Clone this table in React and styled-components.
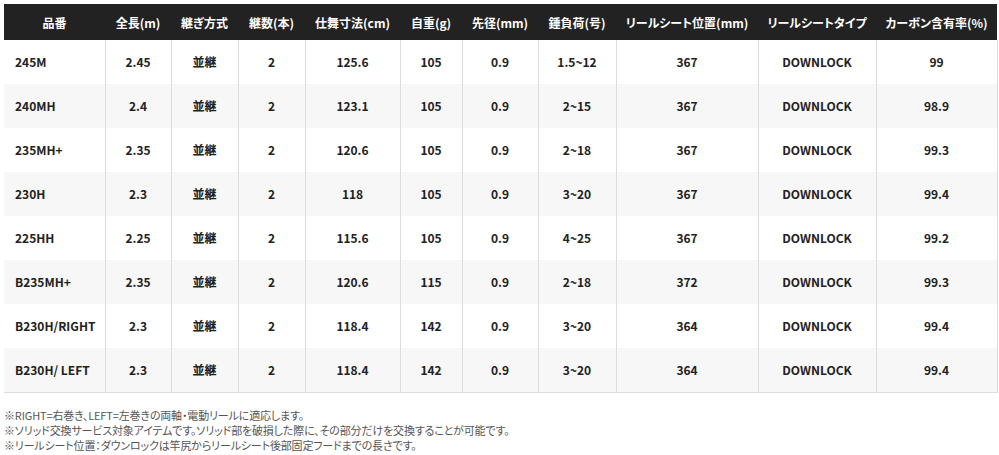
import React from 'react';
import styled, { createGlobalStyle } from 'styled-components';

const GlobalStyle = createGlobalStyle`
	body {
		margin: 0;
		background: #fff;
		font-family: 'Noto Sans CJK JP', 'Noto Sans', sans-serif;
		font-feature-settings: 'palt';
		color: #222;
	}
`;

const Page = styled.div`
	padding: 4px 0 0 4px;
`;

const Table = styled.table`
	border-collapse: collapse;
	table-layout: fixed;
	width: 993px;
	border-bottom: 1px solid #dcdcdc;
`;

const HeadCell = styled.th`
	background: #222;
	color: #fff;
	height: 36px;
	padding: 0;
	font-size: 12px;
	font-weight: 700;
	text-align: center;
	white-space: nowrap;
`;

const Row = styled.tr`
	background: ${(props) => (props.$odd ? '#f7f7f7' : '#fff')};
`;

const Cell = styled.td`
	height: 44px;
	padding: 0 0 0 ${(props) => (props.$left ? '11px' : '0')};
	font-size: 12px;
	font-weight: 700;
	line-height: 16px;
	color: #222;
	text-align: ${(props) => (props.$left ? 'left' : 'center')};
	border-left: ${(props) => (props.$left ? 'none' : '1px solid #dcdcdc')};
	border-right: ${(props) => (props.$last ? '1px solid #dcdcdc' : 'none')};
	white-space: nowrap;
`;

const Notes = styled.div`
	margin-top: 15px;
	font-size: 11px;
	line-height: 15px;
	letter-spacing: -0.15px;
	color: #555;
`;

const columns = [
	{ label: '品番', width: 101 },
	{ label: '全長(m)', width: 66 },
	{ label: '継ぎ方式', width: 67 },
	{ label: '継数(本)', width: 67 },
	{ label: '仕舞寸法(cm)', width: 95 },
	{ label: '自重(g)', width: 62 },
	{ label: '先径(mm)', width: 76 },
	{ label: '錘負荷(号)', width: 78 },
	{ label: 'リールシート位置(mm)', width: 142 },
	{ label: 'リールシートタイプ', width: 118 },
	{ label: 'カーボン含有率(%)', width: 121 },
];

const rows = [
	['245M', '2.45', '並継', '2', '125.6', '105', '0.9', '1.5~12', '367', 'DOWNLOCK', '99'],
	['240MH', '2.4', '並継', '2', '123.1', '105', '0.9', '2~15', '367', 'DOWNLOCK', '98.9'],
	['235MH+', '2.35', '並継', '2', '120.6', '105', '0.9', '2~18', '367', 'DOWNLOCK', '99.3'],
	['230H', '2.3', '並継', '2', '118', '105', '0.9', '3~20', '367', 'DOWNLOCK', '99.4'],
	['225HH', '2.25', '並継', '2', '115.6', '105', '0.9', '4~25', '367', 'DOWNLOCK', '99.2'],
	['B235MH+', '2.35', '並継', '2', '120.6', '115', '0.9', '2~18', '372', 'DOWNLOCK', '99.3'],
	['B230H/RIGHT', '2.3', '並継', '2', '118.4', '142', '0.9', '3~20', '364', 'DOWNLOCK', '99.4'],
	['B230H/ LEFT', '2.3', '並継', '2', '118.4', '142', '0.9', '3~20', '364', 'DOWNLOCK', '99.4'],
];

const notes = [
	'※RIGHT=右巻き、LEFT=左巻きの両軸・電動リールに適応します。',
	'※ソリッド交換サービス対象アイテムです。ソリッド部を破損した際に、その部分だけを交換することが可能です。',
	'※リールシート位置：ダウンロックは竿尻からリールシート後部固定フードまでの長さです。',
];

export default function App() {
	return (
		<>
			<GlobalStyle />
			<Page>
				<Table>
					<colgroup>
						{columns.map((c) => (
							<col key={c.label} style={{ width: c.width }} />
						))}
					</colgroup>
					<thead>
						<tr>
							{columns.map((c) => (
								<HeadCell key={c.label}>{c.label}</HeadCell>
							))}
						</tr>
					</thead>
					<tbody>
						{rows.map((r, i) => (
							<Row key={r[0]} $odd={i % 2 === 1}>
								{r.map((v, j) => (
									<Cell key={j} $left={j === 0} $last={j === r.length - 1}>
										{v}
									</Cell>
								))}
							</Row>
						))}
					</tbody>
				</Table>
				<Notes>
					{notes.map((n) => (
						<div key={n}>{n}</div>
					))}
				</Notes>
			</Page>
		</>
	);
}
